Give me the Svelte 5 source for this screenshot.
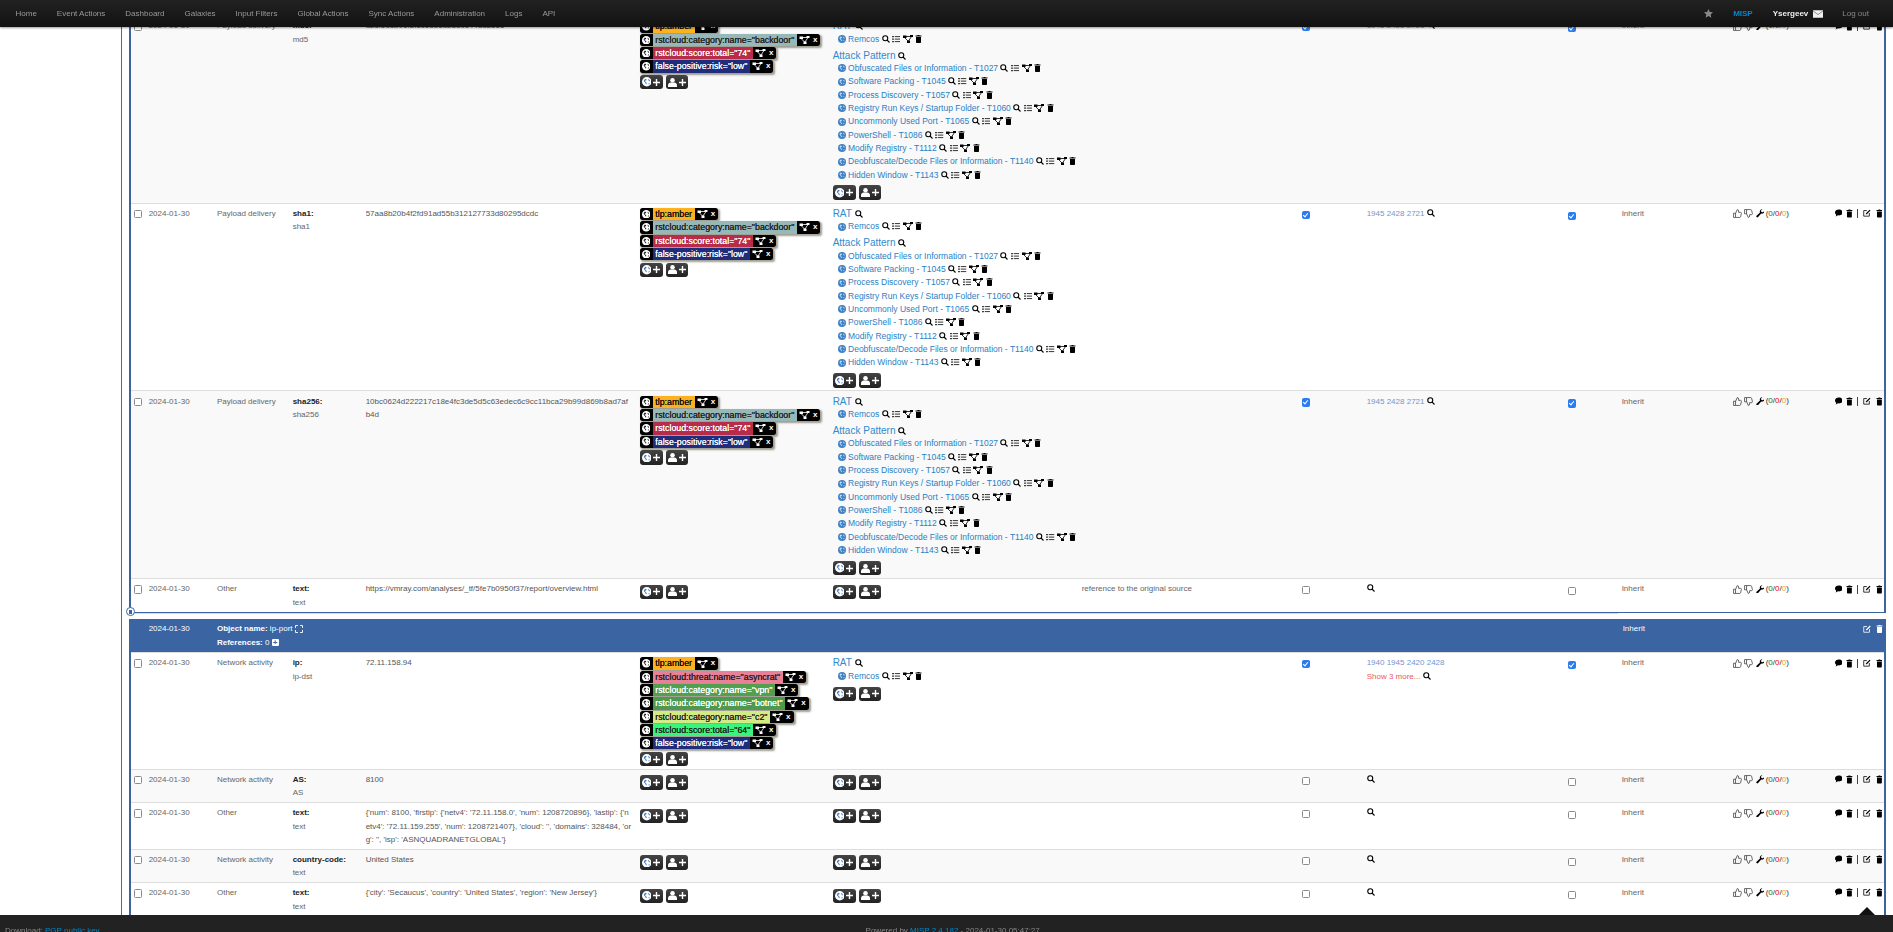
<script>
  const nav = ['Home', 'Event Actions', 'Dashboard', 'Galaxies', 'Input Filters', 'Global Actions', 'Sync Actions', 'Administration', 'Logs', 'API'];

  const tlp = { text: 'tlp:amber', bg: '#ffb01f', fg: '#111' };
  const fp = { text: 'false-positive:risk="low"', bg: '#1f2d7b', fg: '#fff' };
  const payloadTags = [
    tlp,
    { text: 'rstcloud:category:name="backdoor"', bg: '#97b8b8', fg: '#222' },
    { text: 'rstcloud:score:total="74"', bg: '#b72c48', fg: '#fff' },
    fp
  ];
  const ipTags = [
    tlp,
    { text: 'rstcloud:threat:name="asyncrat"', bg: '#ea8098', fg: '#222' },
    { text: 'rstcloud:category:name="vpn"', bg: '#529f4f', fg: '#fff' },
    { text: 'rstcloud:category:name="botnet"', bg: '#4f994f', fg: '#fff' },
    { text: 'rstcloud:category:name="c2"', bg: '#d3ea85', fg: '#222' },
    { text: 'rstcloud:score:total="64"', bg: '#38f57c', fg: '#222' },
    fp
  ];

  const attack = [
    'Obfuscated Files or Information - T1027',
    'Software Packing - T1045',
    'Process Discovery - T1057',
    'Registry Run Keys / Startup Folder - T1060',
    'Uncommonly Used Port - T1065',
    'PowerShell - T1086',
    'Modify Registry - T1112',
    'Deobfuscate/Decode Files or Information - T1140',
    'Hidden Window - T1143'
  ];

  const corr = '1945 2428 2721';
  const payload = { date: '2024-01-30', cat: 'Payload delivery', tags: payloadTags, rat: true, attack: true, ids: true, dist: true, corr };
  const plain = { date: '2024-01-30', tags: [], ids: false, dist: false };

  const firstObject = [
    { ...payload, name: 'md5', type: 'md5', value: 'd2cf5d1b06f2f1c6336d2830c44dd2536' },
    { ...payload, name: 'sha1', type: 'sha1', value: '57aa8b20b4f2fd91ad55b312127733d80295dcdc' },
    { ...payload, name: 'sha256', type: 'sha256', value: '10bc0624d222217c18e4fc3de5d5c63edec6c9cc11bca29b99d869b8ad7afb4d' },
    { ...plain, cat: 'Other', name: 'text', type: 'text', value: 'https://vmray.com/analyses/_tf/5fe7b0950f37/report/overview.html', comment: 'reference to the original source' }
  ];

  const secondObject = [
    { ...plain, cat: 'Network activity', name: 'ip', type: 'ip-dst', value: '72.11.158.94', tags: ipTags, rat: true, ids: true, dist: true, corr: '1940 1945 2420 2428', more: true },
    { ...plain, cat: 'Network activity', name: 'AS', type: 'AS', value: '8100' },
    { ...plain, cat: 'Other', name: 'text', type: 'text', value: "{'num': 8100, 'firstip': {'netv4': '72.11.158.0', 'num': 1208720896}, 'lastip': {'netv4': '72.11.159.255', 'num': 1208721407}, 'cloud': '', 'domains': 328484, 'org': '', 'isp': 'ASNQUADRANETGLOBAL'}" },
    { ...plain, cat: 'Network activity', name: 'country-code', type: 'text', value: 'United States' },
    { ...plain, cat: 'Other', name: 'text', type: 'text', value: "{'city': 'Secaucus', 'country': 'United States', 'region': 'New Jersey'}" }
  ];
</script>

{#snippet globe(cls)}
  <svg class="globe {cls}" viewBox="0 0 16 16">
    <circle cx="8" cy="8" r="8" />
    <path class="land" d="M5.500 3 8 4 7 6 5 6.500 6 8.500 8 10 7.500 12.500 6 11 4.500 8.500 3 7 3.500 5zM11 3 13 5.500 13.500 7 12 7 10.500 5zM11.500 10 13 10.500 12 12.500 10.800 12z" />
  </svg>
{/snippet}

{#snippet search()}
  <svg class="ico search" viewBox="0 0 16 16"><circle cx="6.500" cy="6.500" r="5" /><path d="M10 10l5 5" /></svg>
{/snippet}

{#snippet hierarchy()}
  <svg class="ico hier" viewBox="0 0 20 16">
    <path class="solid" d="M0 1h7v5H0zM14 0h6v4h-6zM8 11h6v5H8z" />
    <path d="M6 3h9M3 5l7 7M17 3l-6 9" />
  </svg>
{/snippet}

{#snippet trash()}
  <svg class="ico trash" viewBox="0 0 14 16"><path class="solid" d="M1 1h4V0h4v1h4v2H1zM2 4h10v10.500c0 .8-.6 1.500-1.400 1.500H3.400C2.600 16 2 15.300 2 14.500z" /></svg>
{/snippet}

{#snippet list()}
  <svg class="ico list" viewBox="0 0 16 16">
    <path class="solid" d="M0 2h3v2.500H0zM0 7h3v2.500H0zM0 12h3v2.500H0z" />
    <path d="M5 3.200h11M5 8.200h11M5 13.200h11" />
  </svg>
{/snippet}

{#snippet edit()}
  <svg class="ico edit" viewBox="0 0 16 16"><path d="M8 3H1.500v11.500H13V8" /><path class="thick" d="M6.500 10 14.500 2" /></svg>
{/snippet}

{#snippet addButtons()}
  <div class="add">
    <span class="btn">
      {@render globe('tint')}
      <svg class="plus" viewBox="0 0 10 10"><path d="M5 0v10M0 5h10" /></svg>
    </span>
    <span class="btn user">
      <svg class="person" viewBox="0 0 14 14"><circle cx="7" cy="3.500" r="3.500" /><path d="M0 14v-2.500C0 8.500 2.500 7 4 7h6c1.500 0 4 1.500 4 4.500V14z" /></svg>
      <svg class="plus" viewBox="0 0 10 10"><path d="M5 0v10M0 5h10" /></svg>
    </span>
  </div>
{/snippet}

{#snippet cluster(text)}
  <div class="cluster">
    {@render globe('blue')}
    <a href="#x">{text}</a>
    {@render search()}{@render list()}{@render hierarchy()}{@render trash()}
  </div>
{/snippet}

{#snippet attribute(row, i)}
  <div class="row" class:striped={i % 2 === 0}>
    <div class="cell"><input class="box pick" type="checkbox" /></div>
    <div class="cell muted">{row.date}</div>
    <div class="cell muted">{row.cat}</div>
    <div class="cell">
      <b class="name">{row.name}:</b>
      <div class="muted">{row.type}</div>
    </div>
    <div class="cell value">{row.value}</div>
    <div class="cell">
      {#each row.tags as tag}
        <div class="tag">
          <span class="tag-globe">{@render globe('inv')}</span>
          <span class="tag-name" style="background:{tag.bg};color:{tag.fg}">{tag.text}</span>
          <span class="tag-act">{@render hierarchy()}<i>x</i></span>
        </div>
      {/each}
      {@render addButtons()}
    </div>
    <div class="cell galaxies">
      {#if row.rat}
        <div class="galaxy">RAT {@render search()}</div>
        {@render cluster('Remcos')}
      {/if}
      {#if row.attack}
        <div class="galaxy second">Attack Pattern {@render search()}</div>
        {#each attack as item}
          {@render cluster(item)}
        {/each}
      {/if}
      {@render addButtons()}
    </div>
    <div class="cell muted">{row.comment ?? ''}</div>
    <div class="cell"><input class="box ids" type="checkbox" checked={row.ids} /></div>
    <div class="cell corr">
      {#if row.more}
        <a href="#x">{row.corr}</a>
        <div><span class="more">Show 3 more...</span> {@render search()}</div>
      {:else if row.corr}
        <a href="#x">{row.corr}</a> {@render search()}
      {:else}
        {@render search()}
      {/if}
    </div>
    <div class="cell"><input class="box dist" type="checkbox" checked={row.dist} /></div>
    <div class="cell muted">Inherit</div>
    <div class="cell sighting">
      <svg class="ico thumb" viewBox="0 0 16 16"><path d="M1 7.500h3.500V15H1zM4.500 8l3-7c1.500 0 2.500 1 2.500 2.500V6h3.500c1 0 1.700 1 1.400 2l-1.400 5.500c-.2 1-.8 1.500-1.700 1.500H4.500" /></svg>
      <svg class="ico thumb" viewBox="0 0 16 16"><path d="M1 1h3.500v7.500H1zM4.500 8l3 7c1.500 0 2.500-1 2.500-2.500V10h3.500c1 0 1.700-1 1.400-2L13.500 2.500C13.300 1.500 12.700 1 11.800 1H4.500" /></svg>
      <svg class="ico wrench" viewBox="0 0 16 16"><path class="solid" d="M15.500 4.500a4.300 4.300 0 0 1-5.700 4L4 15a1.800 1.800 0 0 1-3-2.500L7.500 6.500A4.300 4.300 0 0 1 12 .5L9.500 3l.5 2.500 2.500.5z" /></svg>
      <span class="count">(<em class="g">0</em>/<em class="r">0</em>/<em class="o">0</em>)</span>
    </div>
    <div class="cell actions">
      <svg class="ico bubble" viewBox="0 0 16 16"><path class="solid" d="M8 1c4.400 0 8 2.600 8 6s-3.600 6-8 6c-.8 0-1.500 0-2.200-.2C4.500 14.200 3 15 1 15c1-1 1.500-2.200 1.500-3.500C1 10.400 0 8.800 0 7c0-3.400 3.600-6 8-6z" /></svg>
      {@render trash()}
      <span class="sep"></span>
      {@render edit()}
      {@render trash()}
    </div>
  </div>
{/snippet}

<div class="page">
  <header class="top">
    <nav class="menu">
      {#each nav as item}<span>{item}</span>{/each}
    </nav>
    <svg class="star" viewBox="0 0 16 16"><path d="M8 0l2.400 5.200 5.600.7-4.100 3.900 1.100 5.600L8 12.600l-5 2.800 1.100-5.600L0 5.900l5.600-.7z" /></svg>
    <b class="org">MISP</b>
    <b class="who">Ysergeev</b>
    <svg class="mail" viewBox="0 0 16 12"><path class="env" d="M0 0h16v12H0z" /><path class="flap" d="M0 1l8 6 8-6" /></svg>
    <span class="logout">Log out</span>
  </header>

  <main class="content">
    <div class="rail">
      <section class="group first">
        {#each firstObject as row, i}
          {@render attribute(row, i)}
        {/each}
        <span class="collapse"><i></i></span>
      </section>
      <div class="trail"></div>
      <section class="group">
        <div class="row objhead">
          <div class="cell"></div>
          <div class="cell">2024-01-30</div>
          <div class="cell objname">
            <div><b>Object name:</b> ip-port
              <svg class="ico expand" viewBox="0 0 16 16"><path d="M1 6V1h5M10 1h5v5M15 10v5h-5M6 15H1v-5" /></svg>
            </div>
            <div><b>References:</b> 0 <span class="refplus">+</span></div>
          </div>
          <div class="cell inherit">Inherit</div>
          <div class="cell objact">
            {@render edit()}
            {@render trash()}
          </div>
        </div>
        {#each secondObject as row, i}
          {@render attribute(row, i + 1)}
        {/each}
      </section>
    </div>
  </main>

  <footer class="bottom">
    <span class="arrow"></span>
    <span class="dl">Download: <a href="#x">PGP public key</a></span>
    <span class="powered">Powered by <a href="#x">MISP 2.4.182</a> - 2024-01-30 05:47:27</span>
  </footer>
</div>

<style>
  :global(body) {
    margin: 0;
    background: #fff;
    font-family: "Liberation Sans", Arial, sans-serif;
    font-size: 8px;
    line-height: 13.33px;
    color: #333;
  }

  a {
    color: #0088cc;
    text-decoration: none;
  }

  .page {
    height: 100vh;
    overflow: hidden;
  }

  /* top bar */
  .top {
    position: fixed;
    top: 0;
    left: 0;
    right: 0;
    z-index: 5;
    height: 27px;
    display: flex;
    align-items: center;
    background: linear-gradient(#222, #111);
    box-shadow: 0 1px 2px rgba(0, 0, 0, 0.4);
    color: #999;
  }

  .menu {
    display: flex;
    gap: 20px;
    padding-left: 15.5px;
    flex: 1;
  }

  .star {
    width: 9px;
    height: 9px;
    fill: #888;
  }

  .org {
    margin-left: 20px;
    color: #0088cc;
  }

  .who {
    margin-left: 20px;
    color: #eee;
  }

  .mail {
    width: 10px;
    height: 8px;
    margin-left: 5px;
  }

  .env {
    fill: #eee;
  }

  .flap {
    fill: none;
    stroke: #555;
    stroke-width: 1;
  }

  .logout {
    margin-left: 19px;
    margin-right: 24px;
    color: #888;
  }

  /* content */
  .content {
    padding: 16px 0 0 121px;
  }

  .rail {
    border-left: 1px solid #666;
    padding-left: 7px;
  }

  .group {
    position: relative;
    width: 1757px;
    box-sizing: border-box;
    border: solid #3a65a2;
    border-width: 0 2px;
  }

  .group.first {
    border-bottom-width: 2px;
  }

  .group.first > .row:last-of-type {
    margin-bottom: -1px;
  }

  .trail {
    width: 1489px;
    height: 4.700px;
    border-top: 1px solid #ddd;
  }

  .collapse {
    position: absolute;
    left: -5px;
    bottom: -5px;
    width: 7px;
    height: 7px;
    border: 1.500px solid #3a65a2;
    border-radius: 50%;
    background: #fff;
    display: flex;
    align-items: center;
    justify-content: center;
  }

  .collapse i {
    width: 3px;
    height: 4px;
    background: #3a65a2;
  }

  .row {
    display: grid;
    grid-template-columns: 15px 68.3px 75.7px 73px 274px 193px 249px 220px 65px 201px 54px 111px 102px 53px;
    border-top: 1px solid #ddd;
    margin-top: -1px;
    position: relative;
    background: #fff;
  }

  .row.striped {
    background: #f9f9f9;
  }

  .cell {
    padding: 3.330px 2.670px;
    min-width: 0;
  }

  .muted {
    color: #666;
  }

  .name {
    color: #222;
    display: block;
  }

  .value {
    color: #555;
    word-break: break-all;
    padding-right: 5px;
  }

  .box {
    appearance: none;
    display: block;
    box-sizing: border-box;
    position: relative;
    width: 8.200px;
    height: 8.500px;
    margin: 2.800px 0 0;
    background: #fff;
    border: 1px solid #8a8a8a;
    border-radius: 1.500px;
  }

  .box:checked {
    background: #2a7cf0;
    border-color: #2a7cf0;
  }

  .box:checked::after {
    content: '';
    position: absolute;
    left: 1.600px;
    top: 0;
    width: 2px;
    height: 4px;
    border: solid #fff;
    border-width: 0 1.300px 1.300px 0;
    transform: rotate(40deg);
  }

  .ids {
    margin-top: 3.600px;
  }

  .dist {
    margin-top: 4.600px;
  }

  /* tags */
  .tag {
    display: flex;
    width: fit-content;
    height: 12.300px;
    margin: 1px 0 0;
    line-height: 12.300px;
    font-size: 8.800px;
    border-radius: 2.500px;
    box-shadow: 1.500px 1.500px 2px rgba(80, 80, 60, 0.55);
    overflow: hidden;
  }

  .tag-globe {
    width: 13px;
    background: #000;
    display: flex;
    align-items: center;
    justify-content: center;
  }

  .tag-name {
    padding: 0 2.670px;
    text-shadow: 0 0 0.6px currentColor;
  }

  .tag-act {
    background: #000;
    display: flex;
    align-items: center;
    padding: 0 3px 0 2px;
    gap: 3px;
  }

  .tag-act i {
    color: #fff;
    font-size: 8px;
    font-weight: bold;
    font-style: normal;
  }

  .tag-act .hier {
    width: 11px;
    height: 8px;
    --ink: #fff;
  }

  .add {
    display: flex;
    gap: 3px;
    margin-top: 2.300px;
  }

  .btn {
    width: 23px;
    height: 14.600px;
    border-radius: 3px;
    background: linear-gradient(#444, #222);
    display: flex;
    align-items: center;
    justify-content: center;
    gap: 2px;
  }

  .btn.user {
    width: 22px;
  }

  .plus {
    width: 7px;
    height: 7px;
    fill: none;
    stroke: #fff;
    stroke-width: 2;
  }

  .person {
    width: 9px;
    height: 9px;
    fill: #fff;
  }

  .globe {
    width: 8.500px;
    height: 8.500px;
    flex: none;
  }

  .globe.inv circle,
  .globe.tint circle {
    fill: #fff;
  }

  .globe.inv .land {
    fill: #222;
  }

  .globe.tint {
    width: 9.500px;
    height: 9.500px;
  }

  .globe.tint .land {
    fill: #3c7fc6;
  }

  .globe.blue {
    width: 8px;
    height: 8px;
    vertical-align: -1.300px;
  }

  .globe.blue circle {
    fill: #3f82c6;
  }

  .globe.blue .land {
    fill: #cfe0f2;
  }

  /* galaxy column */
  .galaxies {
    padding-bottom: 3.650px;
  }

  .galaxy {
    font-size: 10px;
    color: #2e8bd0;
  }

  .galaxy.second {
    margin-top: 2.700px;
  }

  .cluster {
    padding-left: 5px;
    font-size: 8.500px;
    white-space: nowrap;
  }

  .cluster a {
    color: #2a7fc4;
  }

  .cluster .list,
  .cluster .hier,
  .cluster .trash {
    margin-left: 2.300px;
  }

  .cluster + .add,
  .galaxy + .add {
    margin-top: 3.500px;
  }

  /* small icons */
  .ico {
    display: inline-block;
    width: 8px;
    height: 8px;
    vertical-align: -1px;
    fill: none;
    stroke: var(--ink, #000);
    stroke-width: 1.600;
  }

  .ico .solid {
    fill: var(--ink, #000);
    stroke: none;
  }

  .search {
    stroke-width: 2.200;
  }

  .hier {
    width: 10px;
  }

  .trash {
    width: 7px;
  }

  .list {
    width: 8.500px;
  }

  .corr a {
    color: #7395cc;
  }

  .more {
    color: #f0555f;
  }

  .sighting {
    display: flex;
    align-items: flex-start;
    gap: 1.500px;
    padding-top: 5.500px;
  }

  .thumb {
    width: 9px;
    height: 9px;
    stroke: #333;
    stroke-width: 1.300;
    margin-right: 1px;
  }

  .wrench {
    width: 8.500px;
    height: 8.500px;
  }

  .count {
    color: #333;
    margin-top: -2.500px;
  }

  .count em {
    font-style: normal;
  }

  .g {
    color: #0a7a2a;
  }

  .r {
    color: #e00;
  }

  .o {
    color: #f0a030;
  }

  .actions {
    display: flex;
    align-items: flex-start;
    padding-top: 5.500px;
  }

  .actions .trash {
    height: 9px;
  }

  .bubble {
    margin-right: 4px;
  }

  .sep {
    width: 1px;
    height: 9px;
    background: #444;
    margin: 0 5px 0 3.500px;
  }

  .edit {
    margin-right: 5px;
  }

  .edit .thick {
    stroke-width: 2.600;
  }

  /* object header */
  .objhead {
    background: #3a65a2;
    color: #fff;
    border-top: 0;
    margin-top: 0;
    height: 34px;
    grid-template-columns: 15px 68.3px 1405.700px 111px 155px;
  }

  .expand {
    --ink: #fff;
    stroke-width: 1.800;
    vertical-align: -1.500px;
  }

  .refplus {
    display: inline-block;
    width: 7px;
    height: 7px;
    line-height: 7px;
    text-align: center;
    background: #fff;
    color: #3a65a2;
    font-weight: bold;
    border-radius: 1px;
  }

  .objact {
    display: flex;
    justify-content: flex-end;
    align-items: flex-start;
    padding: 5.500px 3px 0 0;
    --ink: #fff;
  }

  /* footer */
  .bottom {
    position: fixed;
    left: 0;
    right: 0;
    bottom: 0;
    z-index: 5;
    height: 17px;
    box-sizing: border-box;
    padding: 9px 0 0 5px;
    background: #222;
    color: #888;
    display: flex;
  }

  .powered {
    margin-left: 766px;
  }

  .arrow {
    position: absolute;
    right: 18px;
    top: -8px;
    border: solid transparent;
    border-width: 0 8px 8px;
    border-bottom-color: #111;
  }
</style>
